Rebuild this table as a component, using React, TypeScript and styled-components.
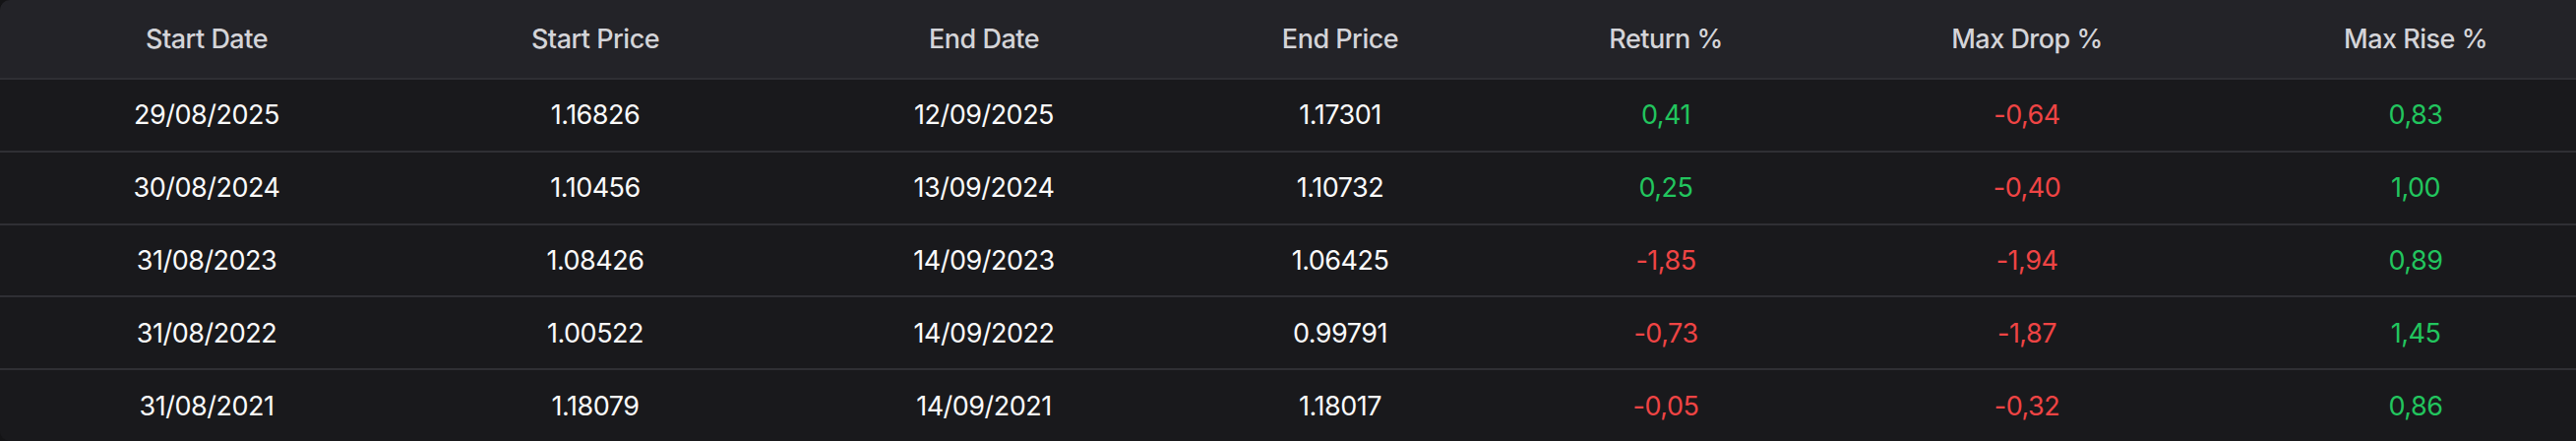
import React from 'react';
import styled, { createGlobalStyle } from 'styled-components';

type Tone = 'plain' | 'up' | 'down';

type Row = {
  startDate: string;
  startPrice: string;
  endDate: string;
  endPrice: string;
  ret: string;
  maxDrop: string;
  maxRise: string;
};

const rows: Row[] = [
  { startDate: '29/08/2025', startPrice: '1.16826', endDate: '12/09/2025', endPrice: '1.17301', ret: '0,41', maxDrop: '-0,64', maxRise: '0,83' },
  { startDate: '30/08/2024', startPrice: '1.10456', endDate: '13/09/2024', endPrice: '1.10732', ret: '0,25', maxDrop: '-0,40', maxRise: '1,00' },
  { startDate: '31/08/2023', startPrice: '1.08426', endDate: '14/09/2023', endPrice: '1.06425', ret: '-1,85', maxDrop: '-1,94', maxRise: '0,89' },
  { startDate: '31/08/2022', startPrice: '1.00522', endDate: '14/09/2022', endPrice: '0.99791', ret: '-0,73', maxDrop: '-1,87', maxRise: '1,45' },
  { startDate: '31/08/2021', startPrice: '1.18079', endDate: '14/09/2021', endPrice: '1.18017', ret: '-0,05', maxDrop: '-0,32', maxRise: '0,86' },
];

const headers = ['Start Date', 'Start Price', 'End Date', 'End Price', 'Return %', 'Max Drop %', 'Max Rise %'];

const toneOf = (v: string): Tone => (v.startsWith('-') ? 'down' : 'up');

const GlobalStyle = createGlobalStyle`
  html, body {
    margin: 0;
    padding: 0;
    background: #141416;
    overflow: hidden;
  }
  body {
    font-family: Inter, "Noto Sans", sans-serif;
  }
`;

// the table is a little wider than the window, its right edge is cut off
const COLUMNS = '420px 370px 420px 304px 358px 376px 414px';

const Table = styled.div`
  width: 2662px;
  border-radius: 10px;
  overflow: hidden;
  background: #19191c;
`;

const HeaderRow = styled.div`
  display: grid;
  grid-template-columns: ${COLUMNS};
  height: 79px;
  align-items: center;
  background: #232328;
`;

const BodyRow = styled.div`
  display: grid;
  grid-template-columns: ${COLUMNS};
  box-sizing: border-box;
  height: 73.8px;
  align-items: center;
  border-top: 2px solid #2f2f34;
  background: #19191c;
`;

const HeadCell = styled.div`
  text-align: center;
  font-size: 27px;
  font-weight: 500;
  letter-spacing: -0.5px;
  color: #d4d4d8;
`;

const Cell = styled.div<{ $tone: Tone }>`
  text-align: center;
  font-size: 27px;
  font-weight: 400;
  letter-spacing: -0.5px;
  color: ${({ $tone }) =>
    $tone === 'up' ? '#22c55e' : $tone === 'down' ? '#ef4444' : '#fafafa'};
`;

export default function App() {
  return (
    <>
      <GlobalStyle />
      <Table>
        <HeaderRow>
          {headers.map((h) => (
            <HeadCell key={h}>{h}</HeadCell>
          ))}
        </HeaderRow>
        {rows.map((r) => (
          <BodyRow key={r.startDate}>
            <Cell $tone="plain">{r.startDate}</Cell>
            <Cell $tone="plain">{r.startPrice}</Cell>
            <Cell $tone="plain">{r.endDate}</Cell>
            <Cell $tone="plain">{r.endPrice}</Cell>
            <Cell $tone={toneOf(r.ret)}>{r.ret}</Cell>
            <Cell $tone={toneOf(r.maxDrop)}>{r.maxDrop}</Cell>
            <Cell $tone={toneOf(r.maxRise)}>{r.maxRise}</Cell>
          </BodyRow>
        ))}
      </Table>
    </>
  );
}
